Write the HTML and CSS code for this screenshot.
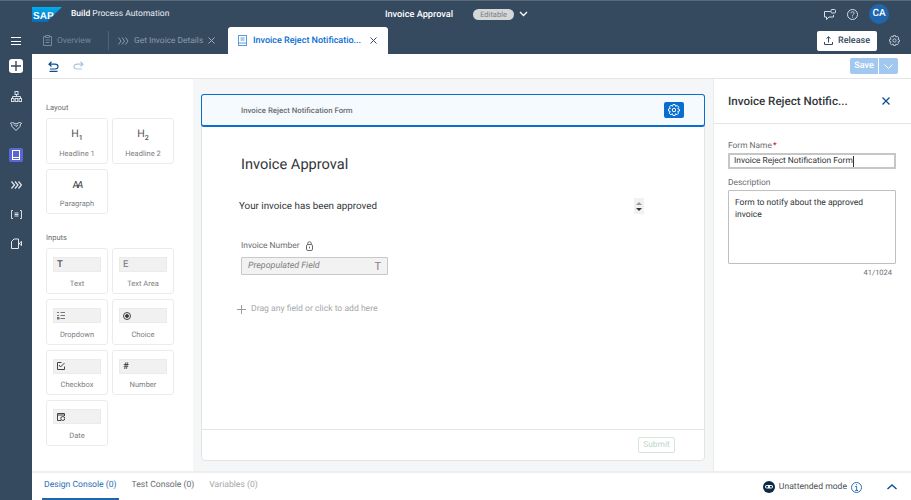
FILE: index.html
```html
<!DOCTYPE html>
<html lang="en">
<head>
    <meta charset="UTF-8">
    <meta name="viewport" content="width=device-width, initial-scale=1.0">
    <title>Invoice Reject Notification Form</title>
    <link rel="stylesheet" href="styles.css">
</head>
<body>
<div class="app">
    <header class="shell">
        <div class="brand">
            <svg class="sap-logo" width="30" height="15" viewBox="0 0 30 15"><defs><linearGradient id="sapg" x1="0" y1="0" x2="0" y2="1"><stop offset="0" stop-color="#00aeef"/><stop offset="1" stop-color="#0a6ab8"/></linearGradient></defs><path d="M0 0H30L15 15H0Z" fill="url(#sapg)"/><text x="1" y="11.5" class="sap-text">SAP</text></svg>
            <span class="product"><b>Build</b> Process Automation</span>
        </div>
        <div class="title-wrap">
            <span class="project">Invoice Approval</span>
            <span class="editable">Editable</span>
            <svg class="caret" width="9" height="6" viewBox="0 0 9 6"><path d="M1 1 4.500 4.500 8 1" fill="none" stroke="#fff" stroke-width="1.300"/></svg>
        </div>
        <div class="shell-actions">
            <svg width="12" height="11" viewBox="0 0 12 11" fill="none" stroke="#d5dde5"><path d="M6.500 2.500H.5V8H2.500V10.500L5 8H9.500V6"/><rect x="7" y=".5" width="4.500" height="3.500" rx="1"/></svg>
            <svg width="11" height="11" viewBox="0 0 11 11" fill="none" stroke="#d5dde5"><circle cx="5.500" cy="5.500" r="5"/><path d="M3.900 4.300C3.900 2.300 7.200 2.300 7.200 4.200 7.200 5.300 5.500 5.400 5.500 6.700"/><path d="M5.500 7.600V8.600"/></svg>
            <span class="avatar">CA</span>
        </div>
    </header>

    <div class="main">
        <nav class="sidebar">
            <button class="burger"><span></span><span></span><span></span></button>
            <span class="add-btn">
                <svg width="10" height="10" viewBox="0 0 10 10"><path d="M5 0V10M0 5H10" stroke="#354a5f" stroke-width="1.400"/></svg>
            </span>
            <div class="nav-list">
                <svg width="11" height="11" viewBox="0 0 11 11" fill="none" stroke="#d5dde5"><rect x="4" y=".5" width="3" height="3"/><path d="M5.500 3.500V5.500M1.500 7.500V5.500H9.500V7.500"/><rect x=".5" y="7.500" width="2.500" height="3"/><rect x="4.250" y="7.500" width="2.500" height="3"/><rect x="8" y="7.500" width="2.500" height="3"/></svg>
                <svg width="12" height="9" viewBox="0 0 12 9" fill="none" stroke="#d5dde5"><path d="M0 1.500 2.500.5 6 2 9.500.5 12 1.500M1.500 2 2 4.500 6 8.500 10 4.500 10.500 2M4 2.500 6 4.500 8 3"/></svg>
                <span class="nav-active">
                    <svg width="8" height="10" viewBox="0 0 8 10" fill="none" stroke="#fff"><rect x=".5" y=".5" width="7" height="9"/><path d="M.5 7.500H7.500"/></svg>
                </span>
                <svg width="11" height="8" viewBox="0 0 11 8" fill="none" stroke="#e4e9ee" stroke-width="1.200"><path d="M.5.500 3.500 4 .5 7.500M4 .5 7 4 4 7.500M7.500.5 10.500 4 7.500 7.500"/></svg>
                <svg width="11" height="9" viewBox="0 0 11 9" fill="none" stroke="#d5dde5"><path d="M2 .5H.5V8.500H2M9 .5H10.500V8.500H9M3.500 3H7.500M3.500 4.500H7.500M3.500 6H7.500"/></svg>
                <svg width="11" height="11" viewBox="0 0 11 11" fill="none" stroke="#e4e9ee"><path d="M7.500 10.500H.5V3.500L3 1H7.500ZM10.500 3.500V7.500L8.500 6V5Z"/></svg>
            </div>
        </nav>

        <div class="workspace">
            <div class="tabs-row">
                <div class="tab tab-muted">
                    <svg width="9" height="11" viewBox="0 0 9 11" fill="none" stroke="#76889a"><path d="M2.500 1.500H.5V10.500H8.500V1.500H6.500M2.500 .5H6.500V2.500H2.500ZM2.500 5H6.500M2.500 7.500H6.500"/></svg>
                    <span>Overview</span>
                </div>
                <div class="tab tab-proc">
                    <svg width="11" height="8" viewBox="0 0 11 8" fill="none" stroke="#8c9cab"><path d="M.5.500 3 4 .5 7.500M4 .5 6.500 4 4 7.500M7.500.5 10 4 7.500 7.500"/></svg>
                    <span>Get Invoice Details</span>
                    <svg width="7" height="7" viewBox="0 0 7 7" stroke="#a3b0bc"><path d="M.5.500 6.500 6.500M6.500.5.500 6.500"/></svg>
                </div>
                <div class="tab tab-active">
                    <svg width="9" height="11" viewBox="0 0 9 11" fill="none" stroke="#5b9bd8"><rect x=".5" y=".5" width="8" height="10"/><path d="M2.500 3H6.500M2.500 5H6.500M.5 8H8.500"/></svg>
                    <span>Invoice Reject Notificatio...</span>
                    <svg width="7" height="7" viewBox="0 0 7 7" stroke="#354a5f"><path d="M.5.500 6.500 6.500M6.500.5.500 6.500"/></svg>
                </div>
                <div class="tab-actions">
                    <span class="release">
                        <svg width="9" height="9" viewBox="0 0 9 9" fill="none" stroke="#354a5f"><path d="M4.500 6.500V.8M2.500 2.500 4.500.8 6.500 2.500M.5 6V8.500H8.500V6"/></svg>
                        Release
                    </span>
                    <svg width="11" height="11" viewBox="0 0 24 24" fill="none" stroke="#c5d0da" stroke-width="2"><circle cx="12" cy="12" r="3.500"/><path d="M10 1H14L15 4.500 18.500 3 21.500 6.500 19.500 9.500 23 11V14L19.500 15 21 18.500 18 21.500 15 19.500 14 23H10L9 19.500 5.500 21.500 2.500 18.500 4.500 15 1 14V10L4.500 9 3 5.500 6 2.500 9 4.500Z"/></svg>
                </div>
            </div>

            <div class="toolbar">
                <div class="undo-redo">
                    <svg width="11" height="11" viewBox="0 0 11 11" fill="none" stroke="#0a4f94" stroke-width="1.200"><path d="M3.500.8 1 3.200 3.500 5.500M1 3.200H7C11 3.200 11 8 7 8H2M1.500 10.300H9.500"/></svg>
                    <svg width="11" height="11" viewBox="0 0 11 11" fill="none" stroke="#a9c6e3" stroke-width="1.200"><path d="M7.500.8 10 3.200 7.500 5.500M10 3.200H4C0 3.200 0 8 4 8H9"/></svg>
                </div>
                <div class="save-group">
                    <span class="save">Save</span>
                    <span class="save-more"><svg width="9" height="5" viewBox="0 0 9 5" fill="none" stroke="#fff"><path d="M.5.500 4.500 4.500 8.500.5"/></svg></span>
                </div>
            </div>

            <div class="editor">
                <aside class="palette">
                    <h3 class="group-title">Layout</h3>
                    <div class="tiles">
                        <div class="tile"><span class="glyph">H<sub>1</sub></span><span class="tile-label">Headline 1</span></div>
                        <div class="tile"><span class="glyph">H<sub>2</sub></span><span class="tile-label">Headline 2</span></div>
                        <div class="tile"><span class="glyph glyph-para">A<i>A</i></span><span class="tile-label">Paragraph</span></div>
                    </div>
                    <h3 class="group-title group-inputs">Inputs</h3>
                    <div class="tiles">
                        <div class="tile"><span class="chip"><b>T</b></span><span class="tile-label">Text</span></div>
                        <div class="tile"><span class="chip"><b class="light">E</b></span><span class="tile-label">Text Area</span></div>
                        <div class="tile"><span class="chip"><svg width="8" height="9" viewBox="0 0 8 9" fill="none" stroke="#777"><path d="M0 1.500H2M0 4.500H2M3.500 1.500H8M3.500 4.500H8M3.500 7.500H8"/><rect x=".5" y="6.500" width="1.500" height="1.500" fill="#666"/></svg></span><span class="tile-label">Dropdown</span></div>
                        <div class="tile"><span class="chip"><svg width="8" height="8" viewBox="0 0 8 8" fill="none" stroke="#444"><circle cx="4" cy="4" r="3.500"/><circle cx="4" cy="4" r="1.500" fill="#333"/></svg></span><span class="tile-label">Choice</span></div>
                        <div class="tile"><span class="chip"><svg width="8" height="8" viewBox="0 0 8 8" fill="none" stroke="#444"><path d="M7.500 4.500V7.500H.5V.5H4.500M2 3 3.500 5 7.500 1"/></svg></span><span class="tile-label">Checkbox</span></div>
                        <div class="tile"><span class="chip"><b class="hash">#</b></span><span class="tile-label">Number</span></div>
                        <div class="tile"><span class="chip"><svg width="8" height="9" viewBox="0 0 8 9" fill="none" stroke="#444"><path d="M4 8.500H.5V1.500H7.500V4M.5 3H7.500"/><circle cx="5.800" cy="6.500" r="2"/></svg></span><span class="tile-label">Date</span></div>
                    </div>
                </aside>

                <section class="canvas">
                    <div class="form-card">
                        <div class="form-head">
                            <span>Invoice Reject Notification Form</span>
                            <span class="gear-btn"><svg width="12" height="12" viewBox="0 0 24 24" fill="none" stroke="#fff" stroke-width="2"><circle cx="12" cy="12" r="3.500"/><path d="M10 1H14L15 4.500 18.500 3 21.500 6.500 19.500 9.500 23 11V14L19.500 15 21 18.500 18 21.500 15 19.500 14 23H10L9 19.500 5.500 21.500 2.500 18.500 4.500 15 1 14V10L4.500 9 3 5.500 6 2.500 9 4.500Z"/></svg></span>
                        </div>
                        <div class="form-body">
                            <h1 class="form-title">Invoice Approval</h1>
                            <div class="para-row">
                                <p>Your invoice has been approved</p>
                                <span class="spinner"><i class="up"></i><i class="down"></i></span>
                            </div>
                            <div class="field-label">Invoice Number
                                <svg width="7" height="10" viewBox="0 0 7 10" fill="none" stroke="#6a6d70"><rect x=".5" y="3.500" width="6" height="6" rx="1.500"/><path d="M1.800 3.500V2C1.800.3 5.200.3 5.200 2V3.500M3.500 5.500V7.500"/></svg>
                            </div>
                            <div class="prepop"><em>Prepopulated Field</em><span>T</span></div>
                            <div class="drop-hint"><svg width="9" height="9" viewBox="0 0 9 9" stroke="#9a9da0"><path d="M4.500 0V9M0 4.500H9"/></svg>Drag any field or click to add here</div>
                        </div>
                        <div class="form-foot"><span class="submit">Submit</span></div>
                    </div>
                </section>

                <aside class="props">
                    <div class="props-head">
                        <span>Invoice Reject Notific...</span>
                        <svg width="8" height="8" viewBox="0 0 8 8" stroke="#0a4f94" stroke-width="1.300"><path d="M.5.500 7.500 7.500M7.500.5.500 7.500"/></svg>
                    </div>
                    <div class="props-body">
                        <label class="prop-label">Form Name<span class="req">*</span></label>
                        <div class="name-input">Invoice Reject Notification Form<span class="cursor"></span></div>
                        <label class="prop-label">Description</label>
                        <div class="desc-input">Form to notify about the approved invoice</div>
                        <div class="counter">41/1024</div>
                    </div>
                </aside>
            </div>

            <footer class="console">
                <div class="console-tabs">
                    <span class="con-tab on">Design Console (0)</span>
                    <span class="con-tab">Test Console (0)</span>
                    <span class="con-tab off">Variables (0)</span>
                </div>
                <div class="console-right">
                    <svg width="12" height="12" viewBox="0 0 12 12"><circle cx="6" cy="6" r="6" fill="#0b2a45"/><rect x="2" y="4" width="8" height="3.500" rx="1.700" fill="#fff"/><circle cx="4" cy="5.700" r="1" fill="#0b2a45"/><circle cx="8" cy="5.700" r="1" fill="#0b2a45"/></svg>
                    <span>Unattended mode</span>
                    <svg class="info" width="11" height="11" viewBox="0 0 11 11" fill="none" stroke="#2a6fb5"><circle cx="5.500" cy="5.500" r="5"/><path d="M4.200 4.500H5.700V8.500M4.200 8.500H7M5.500 2.300V3.300"/></svg>
                    <svg class="chev" width="10" height="6" viewBox="0 0 10 6" fill="none" stroke="#0a4f94" stroke-width="1.400"><path d="M.5 5 5 1 9.500 5"/></svg>
                </div>
            </footer>
        </div>
    </div>
</div>
</body>
</html>
```

FILE: styles.css
```css
* {
    box-sizing: border-box;
}
html, body {
    margin: 0;
    height: 100%;
    overflow: hidden;
}
body {
    font-family: Roboto, "Liberation Sans", Arial, sans-serif;
    font-size: 8.4px;
    text-rendering: geometricPrecision;
    color: #32363a;
    background: #fff;
}
.app {
    width: 911px;
    height: 500px;
    display: flex;
    flex-direction: column;
    background: #354a5f;
}
.shell {
    height: 27px;
    flex: none;
    display: grid;
    grid-template-columns: 1fr auto 1fr;
    align-items: center;
    color: #fff;
    border-top: 1px solid #596a7b;
    padding: 0 22px 0 32px;
}
.brand {
    display: flex;
    align-items: center;
    gap: 9px;
}
.sap-text {
    font-family: "Liberation Sans", Arial, sans-serif;
    font-size: 10px;
    font-weight: 700;
    fill: #fff;
}
.product {
    font-size: 8.5px;
    color: #e8edf1;
}
.product b {
    color: #fff;
    font-weight: 500;
}
.title-wrap {
    display: flex;
    align-items: center;
    padding-right: 8px;
}
.project {
    font-size: 9.2px;
    font-weight: 500;
    margin-right: 20px;
}
.editable {
    width: 41px;
    height: 11px;
    line-height: 11px;
    background: #d5d7d9;
    color: #7c8084;
    border-radius: 6px;
    text-align: center;
    font-size: 7.5px;
    margin-right: 5px;
}
.shell-actions {
    justify-self: end;
    display: flex;
    align-items: center;
    gap: 11px;
}
.avatar {
    width: 20px;
    height: 20px;
    border-radius: 50%;
    background: #1f66ad;
    font-size: 10px;
    font-weight: 500;
    text-align: center;
    line-height: 20px;
}
.main {
    flex: 1;
    display: flex;
    min-height: 0;
}
.sidebar {
    width: 32px;
    flex: none;
    display: flex;
    flex-direction: column;
    align-items: center;
}
.burger {
    width: 10px;
    height: 8px;
    padding: 0;
    border: 0;
    background: none;
    margin-top: 10px;
    display: flex;
    flex-direction: column;
    justify-content: space-between;
}
.burger span {
    display: block;
    height: 1px;
    background: #fff;
}
.add-btn {
    width: 14px;
    height: 14px;
    margin-top: 14px;
    border-radius: 3px;
    background: #fff;
    display: flex;
    align-items: center;
    justify-content: center;
}
.nav-list {
    margin-top: 9px;
    display: grid;
    grid-auto-rows: 29.4px;
    place-items: center;
}
.nav-active {
    width: 14px;
    height: 14px;
    border-radius: 2px;
    background: #5b66d6;
    display: flex;
    align-items: center;
    justify-content: center;
}
.workspace {
    flex: 1;
    min-width: 0;
    display: flex;
    flex-direction: column;
}
.tabs-row {
    height: 27px;
    flex: none;
    display: flex;
    align-items: flex-end;
    color: #8c9cab;
}
.tab {
    height: 27px;
    display: flex;
    align-items: center;
}
.tab-muted {
    width: 77px;
    padding-left: 11px;
    gap: 5px;
    color: #76889a;
    position: relative;
}
.tab-muted::after {
    content: "";
    position: absolute;
    right: 0;
    top: 4px;
    height: 19px;
    width: 1px;
    background: #4f6376;
}
.tab-proc {
    width: 119px;
    padding-left: 9px;
    gap: 5px;
}
.tab-active {
    width: 160px;
    background: #fff;
    color: #0a6ed1;
    font-size: 9px;
    font-weight: 500;
    padding-left: 10px;
    gap: 6px;
    border-radius: 3px 3px 0 0;
}
.tab-active span {
    flex: 1;
    white-space: nowrap;
}
.tab-active svg:last-child {
    margin-right: 11px;
}
.tab-actions {
    margin-left: auto;
    height: 27px;
    display: flex;
    align-items: center;
    gap: 12px;
    padding-right: 11px;
}
.release {
    width: 60px;
    height: 20px;
    background: #fff;
    border-radius: 2px;
    color: #354a5f;
    font-size: 9px;
    font-weight: 500;
    display: flex;
    align-items: center;
    justify-content: center;
    gap: 5px;
}
.toolbar {
    height: 25px;
    flex: none;
    background: #fff;
    border-bottom: 1px solid #e5e5e5;
    display: flex;
    align-items: center;
    justify-content: space-between;
    padding: 0 13px 0 16px;
}
.undo-redo {
    display: flex;
    gap: 14px;
}
.save-group {
    display: flex;
    gap: 1px;
    color: #fff;
}
.save {
    width: 28px;
    height: 16px;
    line-height: 16px;
    text-align: center;
    background: #a3c8ef;
    border-radius: 2px 0 0 2px;
    font-size: 9px;
    font-weight: 500;
}
.save-more {
    width: 19px;
    height: 16px;
    background: #a3c8ef;
    border-radius: 0 2px 2px 0;
    display: flex;
    align-items: center;
    justify-content: center;
}
.editor {
    flex: 1;
    min-height: 0;
    display: flex;
}
.palette {
    width: 161px;
    flex: none;
    background: #fff;
    padding: 23px 0 0 14px;
}
.group-title {
    margin: 0 0 5px;
    font-size: 7.5px;
    font-weight: 400;
    color: #6a6d70;
    line-height: 11px;
}
.group-inputs {
    margin-top: 18px;
}
.tiles {
    display: grid;
    grid-template-columns: 62px 62px;
    grid-auto-rows: 45.7px;
    gap: 5px 4px;
}
.tile {
    border: 1px solid #ebebeb;
    border-radius: 3px;
    display: flex;
    flex-direction: column;
    align-items: center;
    justify-content: space-between;
    padding: 8px 0 4px;
}
.tile-label {
    font-size: 7.5px;
    color: #7d8083;
    line-height: 11px;
}
.glyph {
    font-size: 10.5px;
    color: #555;
    line-height: 13px;
}
.glyph sub {
    font-size: 7px;
    font-weight: 500;
}
.glyph-para {
    color: #333;
    font-size: 10px;
    letter-spacing: -2px;
    margin-top: 1px;
}
.chip {
    width: 48px;
    height: 15px;
    background: #f1f1f1;
    border: 1px solid #ebebeb;
    display: flex;
    align-items: center;
    padding-left: 3px;
}
.chip b {
    font-size: 9.5px;
    color: #555;
    font-weight: 500;
}
.chip b.light {
    color: #888;
}
.chip b.hash {
    color: #333;
}
.canvas {
    flex: 1;
    min-width: 0;
    background: #f5f6f7;
    padding: 15px 8px 10px;
}
.form-card {
    height: 100%;
    background: #fff;
    border: 1px solid #e4e4e4;
    border-radius: 4px;
    display: flex;
    flex-direction: column;
}
.form-head {
    height: 33px;
    flex: none;
    margin: -1px -1px 0;
    background: #f5faff;
    border: 2px solid #0a6ed1;
    border-width: 1.5px 1.5px 2px;
    border-radius: 3px;
    display: flex;
    align-items: center;
    justify-content: space-between;
    padding: 0 20px 0 39px;
    font-size: 7.8px;
    font-weight: 500;
    color: #6a6d70;
}
.gear-btn {
    width: 20px;
    height: 16px;
    border-radius: 2px;
    background: #0a6ed1;
    display: flex;
    align-items: center;
    justify-content: center;
}
.form-body {
    flex: 1;
    padding: 27px 0 0 39px;
}
.form-title {
    margin: 0;
    font-size: 14.6px;
    font-weight: 400;
    line-height: 20px;
    color: #32363a;
}
.para-row {
    display: flex;
    align-items: center;
    justify-content: space-between;
    margin-top: 24px;
    padding-right: 60px;
    height: 16px;
}
.para-row p {
    margin: 0 0 0 -2px;
    font-size: 9.8px;
}
.spinner {
    width: 10px;
    height: 16px;
    background: #f1f1f1;
    display: flex;
    flex-direction: column;
    align-items: center;
    justify-content: center;
    gap: 3px;
}
.spinner i {
    width: 0;
    height: 0;
    border: 3px solid transparent;
}
.spinner .up {
    border-top: 0;
    border-bottom: 3px solid #999;
}
.spinner .down {
    border-bottom: 0;
    border-top: 3px solid #333;
}
.field-label {
    margin-top: 26px;
    display: flex;
    align-items: center;
    gap: 6px;
    color: #6a6d70;
    line-height: 12px;
}
.prepop {
    width: 147px;
    height: 18px;
    margin-top: 5px;
    background: #f2f2f2;
    border: 1px solid #c8c8c8;
    border-radius: 1px;
    display: flex;
    align-items: center;
    justify-content: space-between;
    padding: 0 6px;
    color: #7d8083;
    font-size: 8.9px;
}
.prepop span {
    font-size: 11px;
}
.drop-hint {
    margin: 29px 0 0 -4px;
    display: flex;
    align-items: center;
    gap: 5px;
    color: #a5a8ab;
    font-size: 8.6px;
}
.form-foot {
    height: 31px;
    flex: none;
    border-top: 1px solid #e4e4e4;
    display: flex;
    align-items: center;
    justify-content: flex-end;
    padding-right: 29px;
}
.submit {
    width: 37px;
    height: 16px;
    line-height: 14px;
    border: 1px solid #d3e6dc;
    border-radius: 2px;
    text-align: center;
    color: #bcd6c9;
}
.props {
    width: 198px;
    flex: none;
    background: #fff;
    border-left: 1px solid #ececec;
}
.props-head {
    height: 45px;
    border-bottom: 1px solid #e5e5e5;
    display: flex;
    align-items: center;
    justify-content: space-between;
    padding: 0 21px 0 14px;
    font-size: 11.6px;
    font-weight: 500;
    color: #32363a;
}
.props-body {
    padding: 16px 15px 0 14px;
}
.prop-label {
    display: block;
    color: #6a6d70;
    line-height: 12px;
}
.req {
    color: #c00;
    margin-left: 1px;
}
.name-input {
    height: 16px;
    margin: 1px 0 8px;
    border: 2px solid #c6c6c6;
    padding-left: 4px;
    line-height: 12px;
    white-space: nowrap;
    display: flex;
    align-items: center;
}
.cursor {
    width: 1px;
    height: 11px;
    background: #333;
}
.desc-input {
    height: 74px;
    margin-top: 1px;
    border: 1px solid #bfbfbf;
    border-radius: 1px;
    padding: 6px;
    line-height: 12px;
    font-size: 8.5px;
}
.counter {
    margin-top: 4px;
    text-align: right;
    font-size: 7.5px;
    color: #6a6d70;
    padding-right: 4px;
}
.console {
    height: 29px;
    flex: none;
    background: #fff;
    border-top: 2px solid #eeeeee;
    display: flex;
    align-items: stretch;
    justify-content: space-between;
    padding: 0 14px 0 10px;
    font-size: 8.6px;
}
.console-tabs {
    display: flex;
    gap: 11px;
}
.con-tab {
    padding: 0 2px;
    line-height: 24px;
    color: #6a6d70;
}
.con-tab.on {
    color: #2a6fb5;
    border-bottom: 2px solid #1f66ad;
}
.con-tab.off {
    color: #a5a8ab;
}
.console-right {
    display: flex;
    align-items: center;
    gap: 4px;
    color: #4d5154;
    padding-top: 1px;
}
.console-right .chev {
    margin-left: 21px;
}
```
